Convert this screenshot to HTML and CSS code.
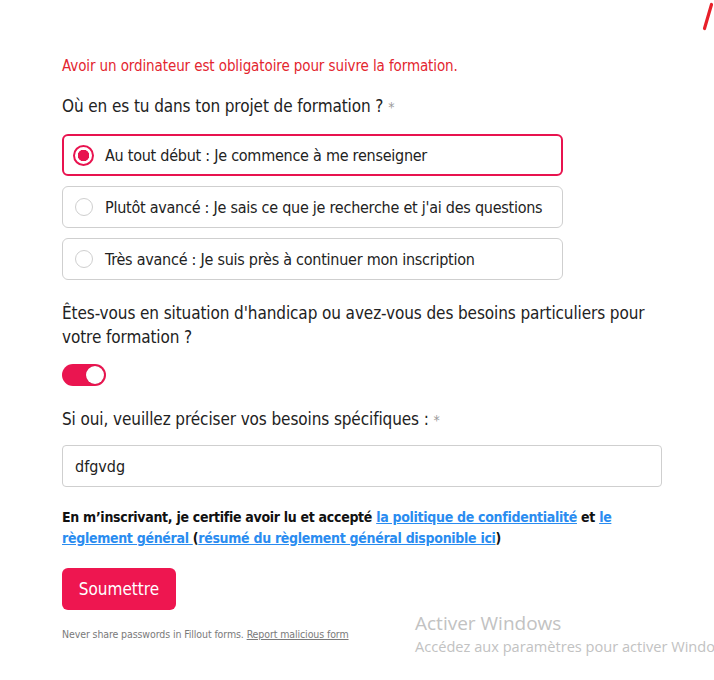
FILE: index.html
```html
<!DOCTYPE html>
<html lang="fr">
<head>
<meta charset="utf-8">
<title>Formulaire</title>
<link rel="stylesheet" href="styles.css">
</head>
<body>
<svg class="slash" width="20" height="40" viewBox="0 0 20 40"><line x1="17.5" y1="4.5" x2="10.5" y2="28.5" stroke="#e8202a" stroke-width="3.2" stroke-linecap="round"/></svg>
<main class="form">
  <p class="notice">Avoir un ordinateur est obligatoire pour suivre la formation.</p>

  <p class="question">Où en es tu dans ton projet de formation ? <span class="req">*</span></p>
  <div class="options">
    <label class="option selected"><span class="radio"></span><span class="opt-text">Au tout début : Je commence à me renseigner</span></label>
    <label class="option"><span class="radio"></span><span class="opt-text">Plutôt avancé : Je sais ce que je recherche et j'ai des questions</span></label>
    <label class="option"><span class="radio"></span><span class="opt-text">Très avancé : Je suis près à continuer mon inscription</span></label>
  </div>

  <p class="question q2">Êtes-vous en situation d'handicap ou avez-vous des besoins particuliers pour votre formation ?</p>
  <div class="toggle"><span class="knob"></span></div>

  <p class="question q3">Si oui, veuillez préciser vos besoins spécifiques : <span class="req">*</span></p>
  <div class="input">dfgvdg</div>

  <p class="consent">En m’inscrivant, je certifie avoir lu et accepté <a href="#">la politique de confidentialité</a> et <a href="#">le règlement général </a>(<a href="#">résumé du règlement général disponible ici</a>)</p>

  <button class="submit" type="button">Soumettre</button>

  <p class="footer">Never share passwords in Fillout forms. <a href="#">Report malicious form</a></p>
</main>
<div class="watermark">
  <div class="wm-title">Activer Windows</div>
  <div class="wm-sub">Accédez aux paramètres pour activer Windows.</div>
</div>
</body>
</html>
```

FILE: styles.css
```css
html, body {
  margin: 0;
  padding: 0;
  background: #ffffff;
  overflow: hidden;
}
body {
  width: 714px;
  height: 680px;
  position: relative;
  font-family: "DejaVu Sans Condensed", "Liberation Sans", sans-serif;
  color: #222222;
}
.slash {
  position: absolute;
  top: 0;
  right: 0;
}
.form {
  width: 600px;
  padding: 55px 0 0 62px;
  display: flex;
  flex-direction: column;
}
p { margin: 0; }
.notice {
  font-size: 15px;
  line-height: 22px;
  color: #e3262f;
  letter-spacing: -0.1px;
}
.question {
  margin-top: 17px;
  font-size: 17px;
  line-height: 24px;
  letter-spacing: -0.1px;
  color: #222222;
}
.req { color: #9a9a9a; font-size: 14px; }
.options {
  margin-top: 15px;
  display: flex;
  flex-direction: column;
  gap: 10px;
  width: 501px;
}
.option {
  height: 42px;
  box-sizing: border-box;
  border: 1px solid #cfcfcf;
  border-radius: 6px;
  display: flex;
  align-items: center;
  padding-left: 12px;
  gap: 12px;
}
.option.selected {
  border: 2px solid #e8134f;
  padding-left: 9px;
  gap: 11px;
}
.radio {
  width: 18px;
  height: 18px;
  box-sizing: border-box;
  border: 1px solid #cfcfcf;
  border-radius: 50%;
  flex: none;
}
.option.selected .radio {
  width: 21px;
  height: 21px;
  border: 2.5px solid #e8134f;
  background: radial-gradient(circle, #e8134f 0 5.5px, #ffffff 6px);
}
.opt-text {
  font-size: 16px;
  letter-spacing: -0.25px;
  color: #222222;
}
.q2 { margin-top: 21px; }
.toggle {
  margin-top: 15px;
  width: 44px;
  height: 22px;
  border-radius: 11px;
  background: #ea1550;
  display: flex;
  align-items: center;
  justify-content: flex-end;
  padding-right: 2px;
  box-sizing: border-box;
}
.knob {
  width: 18px;
  height: 18px;
  border-radius: 50%;
  background: #fff;
  box-shadow: 0 0 1px rgba(0,0,0,0.3);
}
.q3 { margin-top: 21px; }
.input {
  margin-top: 13px;
  height: 42px;
  box-sizing: border-box;
  border: 1px solid #cfcfcf;
  border-radius: 4px;
  padding: 0 12px;
  display: flex;
  align-items: center;
  font-size: 16px;
}
.consent {
  margin-top: 20px;
  font-size: 14px;
  line-height: 21px;
  font-weight: bold;
  color: #111;
  letter-spacing: -0.3px;
}
.consent a {
  color: #2a8cf0;
  text-decoration: underline;
}
.submit {
  margin-top: 19px;
  width: 114px;
  height: 42px;
  border: none;
  border-radius: 6px;
  background: #ee1650;
  color: #fff;
  font-family: inherit;
  font-size: 17px;
  padding: 0;
  align-self: flex-start;
}
.footer {
  margin-top: 16px;
  font-size: 10.5px;
  line-height: 16px;
  color: #7a7a7a;
  letter-spacing: -0.1px;
}
.footer a { color: #7a7a7a; text-decoration: underline; }
.watermark {
  position: absolute;
  left: 415px;
  top: 610px;
  white-space: nowrap;
  font-family: "Open Sans", "Noto Sans", sans-serif;
  color: #c2c2c2;
}
.wm-title {
  font-size: 19px;
  line-height: 26px;
}
.wm-sub {
  font-size: 14.6px;
  line-height: 20px;
}
```
